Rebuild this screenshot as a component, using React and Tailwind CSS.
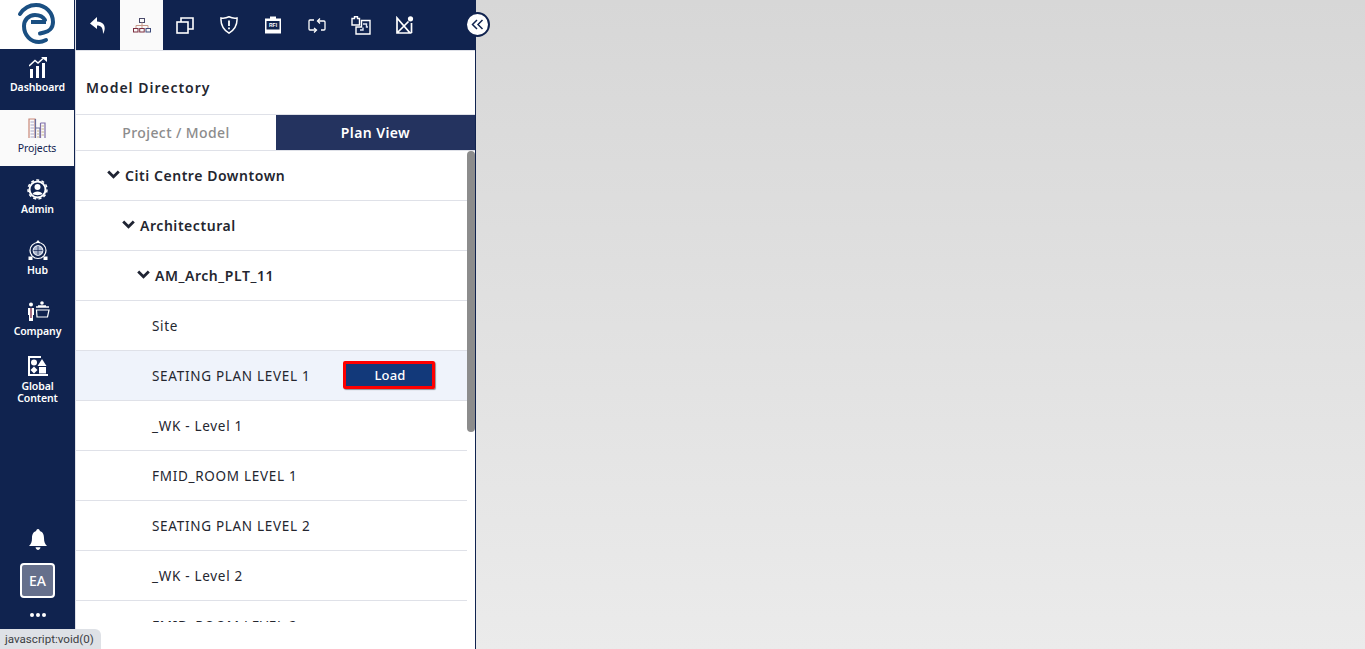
const topIcons = ['shield', 'rfi', 'swap', 'puzzle', 'measure']

function Logo() {
  return (
    <svg width="48" height="48" viewBox="0 0 48 48" fill="none" stroke="#1a4f82" strokeWidth="4">
      <path d="M7 13 C11 7 16 4 23 4 C33 4 40 12 40 21 C40 27 36 30.5 31 31.5 L27 32.5" strokeLinecap="round" />
      <path d="M32 19 C30 15.5 26 14 22 14 C15.5 14 11 19 11 25 C11 34.5 18 41 26 41 C28 41 30 40.5 33 39" strokeLinecap="round" />
      <path d="M18 21 H33" strokeWidth="4" />
    </svg>
  )
}

function BackIcon() {
  return (
    <svg width="16" height="17" viewBox="0 0 16 17" fill="white">
      <path d="M7 0 L0 6.5 L7 12 L7 8.5 C11 8.5 13 10.5 13 17 C15.5 13 16.5 5 7 4.5 Z" />
    </svg>
  )
}

function TreeIcon() {
  return (
    <svg width="18" height="15" viewBox="0 0 18 15" fill="none" stroke="#7d2e3f" strokeWidth="1">
      <rect x="6.5" y="0.5" width="5" height="4" stroke="#4a4a6a" />
      <path d="M9 4.5 V7.5 M3 10.5 V7.5 H15 V10.5 M9 7.5 V10.5" stroke="#c79a8a" />
      <rect x="0.5" y="10.5" width="4.5" height="3.5" />
      <rect x="6.7" y="10.5" width="4.5" height="3.5" />
      <rect x="13" y="10.5" width="4.5" height="3.5" stroke="#3d4a7a" />
    </svg>
  )
}

function CopyIcon() {
  return (
    <svg width="18" height="17" viewBox="0 0 18 17" fill="none" stroke="white" strokeWidth="1.6">
      <rect x="1" y="5" width="11" height="11" />
      <path d="M5 5 V1 H17 V12 H12" />
    </svg>
  )
}

function TopIcon({ name }) {
  if (name === 'shield') {
    return (
      <svg width="18" height="18" viewBox="0 0 18 18" fill="none" stroke="white" strokeWidth="1.5">
        <path d="M1 2 C4 2.5 6.5 2 9 0.8 C11.5 2 14 2.5 17 2 C17.5 9 14 14 9 17.2 C4 14 0.5 9 1 2 Z" />
        <path d="M9 4.5 V10 M9 11.5 V13.2" strokeWidth="1.8" />
      </svg>
    )
  }
  if (name === 'rfi') {
    return (
      <svg width="16" height="18" viewBox="0 0 16 18">
        <path d="M0 2.5 H5 V0.5 H11 V2.5 H16 V17.5 H0 Z" fill="white" />
        <rect x="1.5" y="5" width="13" height="8.5" fill="#10234f" />
        <text x="8" y="11" textAnchor="middle" fontSize="5" fontWeight="700" fill="white" fontFamily="'Liberation Sans', sans-serif">RFI</text>
      </svg>
    )
  }
  if (name === 'swap') {
    return (
      <svg width="18" height="17" viewBox="0 0 18 17" fill="none" stroke="white" strokeWidth="1.3">
        <path d="M6 3 H2 Q1 3 1 4 V12 Q1 13 2 13 H8" />
        <path d="M6 11 L8.5 13 L6 15.5" />
        <path d="M10 4 H16 Q17 4 17 5 V12 Q17 13 16 13 H13" />
        <path d="M12 1.5 L9.5 4 L12 6.5" />
      </svg>
    )
  }
  if (name === 'puzzle') {
    return (
      <svg width="20" height="19" viewBox="0 0 20 19" fill="none" stroke="white" strokeWidth="1.4">
        <path d="M1 2.5 H3.5 V0.8 H6.5 V2.5 H8.5 V9 H1 Z" />
        <path d="M10.5 4.5 H19 V18 H5 V11 H10.5 Z" />
        <path d="M12 8 H15.5 V11 H17 M9 14 H12 V11.5" stroke="#dfe6f5" />
      </svg>
    )
  }
  return (
    <svg width="18" height="18" viewBox="0 0 18 18" fill="none" stroke="white" strokeWidth="1.7">
      <path d="M1 17 V2 L14 17 Z M1 17 L12.5 5.5 M15.5 7 V17" />
      <circle cx="14.5" cy="2.8" r="2.6" fill="white" stroke="none" />
    </svg>
  )
}

function NavIcon({ name }) {
  if (name === 'Dashboard') {
    return (
      <svg width="18" height="21" viewBox="0 0 18 21" fill="white">
        <rect x="1" y="12" width="3" height="9" />
        <rect x="7" y="9" width="3" height="12" />
        <rect x="13" y="6" width="3" height="15" />
        <path d="M0 9 L6 3.5 L9 6 L14 1.5" fill="none" stroke="white" strokeWidth="1.5" />
        <path d="M12 0 H18 V5 Z" />
      </svg>
    )
  }
  if (name === 'Projects') {
    return (
      <svg width="18" height="21" viewBox="0 0 18 21" fill="none" strokeWidth="1.2">
        <path d="M1 20 V1 H7 V20" stroke="#c98878" />
        <path d="M7.5 1 V20" stroke="#6a6f9e" />
        <path d="M2.5 4 H6 M2.5 7 H6 M2.5 10 H6 M2.5 13 H6 M2.5 16 H6 M2.5 19 H6" stroke="#a7a7c9" />
        <path d="M8 10 H12 V20" stroke="#6a6f9e" />
        <path d="M9 13 H11 M9 16 H11 M9 19 H11" stroke="#c9b48a" />
        <path d="M12.5 5 H17 V20 M12.5 5 V20" stroke="#7f6fa8" />
        <path d="M13.5 8 H16 M13.5 11 H16 M13.5 14 H16 M13.5 17 H16" stroke="#c9b48a" />
      </svg>
    )
  }
  if (name === 'Admin') {
    return (
      <svg width="21" height="21" viewBox="0 0 21 21" fill="none" stroke="white">
        <circle cx="10.5" cy="10.5" r="8" strokeWidth="2" />
        <circle cx="10.5" cy="10.5" r="9.5" strokeWidth="1.5" strokeDasharray="3 2.4" />
        <circle cx="10.5" cy="8" r="3" fill="white" stroke="none" />
        <path d="M5.5 15 C6.5 11.5 14.5 11.5 15.5 15 C13 16.5 8 16.5 5.5 15 Z" fill="white" stroke="none" />
      </svg>
    )
  }
  if (name === 'Hub') {
    return (
      <svg width="20" height="21" viewBox="0 0 20 21" fill="none" stroke="white" strokeWidth="1.2">
        <circle cx="10" cy="10.5" r="8" />
        <circle cx="10" cy="10.5" r="4.8" fill="#aab4cc" stroke="#e3e7f0" />
        <path d="M5.5 10.5 H14.5 M10 6 V15" stroke="#10234f" strokeWidth="0.7" />
        <path d="M10 0 L12.5 3 H7.5 Z" fill="white" stroke="none" />
        <rect x="0.5" y="16.5" width="4" height="3.5" fill="white" stroke="none" />
        <rect x="15.5" y="16.5" width="4" height="3.5" fill="white" stroke="none" />
      </svg>
    )
  }
  if (name === 'Company') {
    return (
      <svg width="24" height="20" viewBox="0 0 24 20" fill="none" stroke="white" strokeWidth="1.2">
        <circle cx="5" cy="3.5" r="2" fill="white" stroke="none" />
        <path d="M2 7 H8 V14 H7 V20 H3 V14 H2 Z" fill="white" stroke="none" />
        <path d="M5 7 V17" stroke="#8b3f5a" strokeWidth="1.5" />
        <circle cx="16" cy="2" r="1.8" fill="white" stroke="none" />
        <path d="M10 6 H23 M12 5 H20" strokeWidth="1.6" />
        <path d="M10.5 9 H23 L21.5 16 H11 Z" />
      </svg>
    )
  }
  return (
    <svg width="20" height="20" viewBox="0 0 20 20" fill="white">
      <path d="M0 0 H13 V2 H2 V18 H20 V20 H0 Z" />
      <circle cx="6" cy="6.5" r="3" />
      <path d="M14 3 L18.5 10 H9.5 Z" />
      <path d="M6 10.5 L9.5 14 L6 17.5 L2.5 14 Z" />
      <rect x="11" y="11" width="7" height="6.5" />
    </svg>
  )
}

const navItems = [
  { label: 'Dashboard', box: 'h-[61px] pt-[8px]', gap: 'mt-[3px]' },
  { label: 'Projects', box: 'h-[56px] pt-[8px]', gap: 'mt-[3px]', active: true },
  { label: 'Admin', box: 'h-[61px] pt-[13px]', gap: 'mt-[3px]' },
  { label: 'Hub', box: 'h-[61px] pt-[13px]', gap: 'mt-[3px]' },
  { label: 'Company', box: 'h-[61px] pt-[13px]', gap: 'mt-[4px]' },
  { label: 'Global Content', icon: 'Global', box: 'h-[70px] pt-[7px]', gap: 'mt-[4px]' },
]

const rows = [
  { label: 'Site' },
  { label: 'SEATING PLAN LEVEL 1', selected: true },
  { label: '_WK - Level 1' },
  { label: 'FMID_ROOM LEVEL 1' },
  { label: 'SEATING PLAN LEVEL 2' },
  { label: '_WK - Level 2' },
  { label: 'FMID_ROOM LEVEL 2' },
]

function Chevron() {
  return (
    <svg width="13" height="9" viewBox="0 0 13 9" fill="none" stroke="#1f2433" strokeWidth="2.8" className="shrink-0 mb-[3px]">
      <path d="M1.2 1.5 L6.5 6.8 L11.8 1.5" />
    </svg>
  )
}

function Heading({ label, pad }) {
  return (
    <div className={`h-[50px] flex items-center gap-[5px] border-b border-[#dfe1e8] font-semibold text-[14px] tracking-[0.55px] text-[#24262f] ${pad}`}>
      <Chevron />
      <span>{label}</span>
    </div>
  )
}

export default function App() {
  return (
    <div className="relative flex h-[649px] w-full overflow-hidden bg-white font-['Noto_Sans',sans-serif]">
      <aside className="w-[75px] shrink-0 bg-[#10234f] flex flex-col">
        <div className="h-[49px] bg-white flex items-center justify-center mr-px">
          <Logo />
        </div>
        {navItems.map(function (item) {
          return (
            <div
              key={item.label}
              className={item.active
                ? `${item.box} bg-[#fafafa] mr-px flex flex-col items-center text-[#10234f]`
                : `${item.box} flex flex-col items-center text-white font-semibold`}
            >
              <NavIcon name={item.icon || item.label} />
              <span className={`${item.gap} text-[10.5px] leading-[12px] text-center w-[60px] tracking-[-0.1px]`}>{item.label}</span>
            </div>
          )
        })}
        <div className="mt-auto flex flex-col items-center pb-[32px]">
          <svg width="18" height="21" viewBox="0 0 18 21" fill="white">
            <path d="M9 0 C10.2 0 10.8 1 10.8 2 C14 3 15 6 15 9 C15 13 16 15 18 17 H0 C2 15 3 13 3 9 C3 6 4 3 7.2 2 C7.2 1 7.8 0 9 0 Z" />
            <path d="M6.5 18.2 H11.5 C11.2 20 10 21 9 21 C8 21 6.8 20 6.5 18.2 Z" />
          </svg>
          <div className="mt-[13px] w-[35px] h-[35px] rounded-[4px] border-2 border-white bg-[#66708c] text-white text-[14px] font-medium flex items-center justify-center">EA</div>
          <div className="mt-[15px] flex gap-[2px]">
            <span className="w-[4px] h-[4px] rounded-full bg-white" />
            <span className="w-[4px] h-[4px] rounded-full bg-white" />
            <span className="w-[4px] h-[4px] rounded-full bg-white" />
          </div>
        </div>
      </aside>

      <section className="w-[401px] shrink-0 border-l border-[#dfe1e8] border-r border-r-[#10234f] flex flex-col">
        <div className="h-[51px] shrink-0 bg-[#10234f] border-b border-[#dfe1e8] flex items-center">
          <div className="w-[44px] flex justify-center"><BackIcon /></div>
          <div className="w-[43px] h-full bg-[#fafafa] flex items-center justify-center"><TreeIcon /></div>
          <div className="w-[44px] flex justify-center"><CopyIcon /></div>
          {topIcons.map(function (name) {
            return <div key={name} className="w-[44px] flex justify-center"><TopIcon name={name} /></div>
          })}
        </div>
        <div className="h-[64px] shrink-0 border-b border-[#dfe1e8] flex items-center pl-[10px] pt-[10px] font-semibold text-[14px] tracking-[1px] text-[#24262f]">
          Model Directory
        </div>
        <div className="h-[36px] shrink-0 flex border-b border-[#dfe1e8] text-[14px] tracking-[0.4px]">
          <div className="w-[200px] flex items-center justify-center text-[#8c8c8c] font-medium">Project / Model</div>
          <div className="flex-1 bg-[#24335f] text-white font-semibold flex items-center justify-center">Plan View</div>
        </div>
        <div className="flex-1 flex min-h-0 overflow-hidden">
          <div className="flex-1 min-w-0 h-[471px] overflow-hidden">
            <Heading label="Citi Centre Downtown" pad="pl-[31px]" />
            <Heading label="Architectural" pad="pl-[46px]" />
            <Heading label="AM_Arch_PLT_11" pad="pl-[61px]" />
            {rows.map(function (row) {
              return (
                <div
                  key={row.label}
                  className={row.selected
                    ? 'h-[50px] flex items-center justify-between border-b border-[#dfe1e8] bg-[#eff3fb] pl-[76px] pr-[32px] text-[13.5px] tracking-[0.7px] text-[#24262f]'
                    : 'h-[50px] flex items-center border-b border-[#dfe1e8] pl-[76px] text-[13.5px] tracking-[0.7px] text-[#24262f]'}
                >
                  <span className="mt-[2px]">{row.label}</span>
                  {row.selected && (
                    <button className="w-[92px] h-[28px] mb-[2px] pt-[2px] rounded-[2px] border-[3px] border-[#ff0000] bg-[#12397a] text-white text-[13px] font-medium tracking-[0.2px] pl-[2px] shadow-[1px_1px_1px_rgba(0,0,0,0.4)]">Load</button>
                  )}
                </div>
              )
            })}
          </div>
          <div className="w-[8px] shrink-0 bg-white">
            <div className="h-[281px] rounded-[4px] bg-[#8c8c8c]" />
          </div>
        </div>
      </section>

      <main className="flex-1 bg-gradient-to-b from-[#d7d7d7] to-[#ebebeb]" />

      <button className="absolute left-[465px] top-[12px] w-[25px] h-[25px] rounded-full bg-white border-2 border-[#10234f] flex items-center justify-center">
        <svg width="13" height="11" viewBox="0 0 13 11" fill="none" stroke="#10234f" strokeWidth="1.5">
          <path d="M6 1 L1.5 5.5 L6 10 M11.5 1 L7 5.5 L11.5 10" />
        </svg>
      </button>

      <div className="absolute left-0 bottom-0 h-[20px] w-[101px] bg-[#dee1e6] rounded-tr-[6px] pl-[5px] text-[11.6px] leading-[20px] text-[#3c4043] font-['Roboto',sans-serif] whitespace-nowrap">
        javascript:void(0)
      </div>
    </div>
  )
}
